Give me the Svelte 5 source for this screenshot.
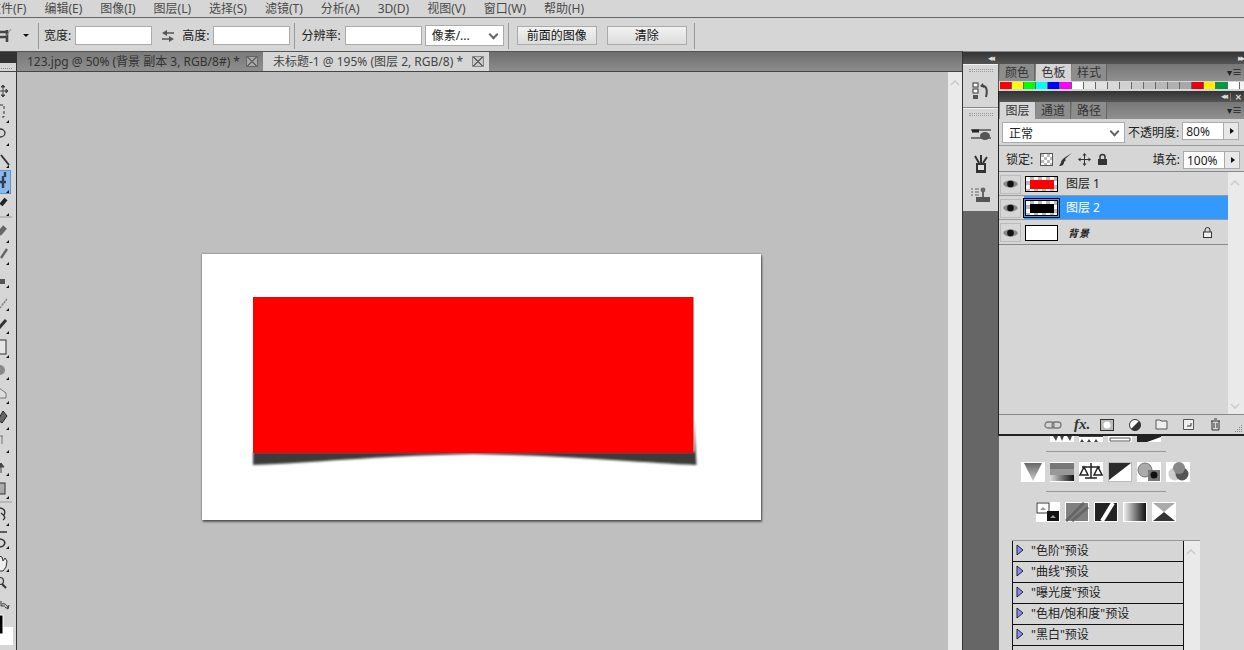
<script>
  const menus = ['文件(F)', '编辑(E)', '图像(I)', '图层(L)', '选择(S)', '滤镜(T)', '分析(A)', '3D(D)', '视图(V)', '窗口(W)', '帮助(H)'];

  const grays = ['#fff', '#e8e8e8', '#e0e0e0', '#d8d8d8', '#d0d0d0', '#c8c8c8', '#c0c0c0', '#b8b8b8', '#b0b0b0', '#a8a8a8'];
  const swatches = ['#f00', '#ff0', '#0f0', '#0ff', '#00f', '#f0f', ...grays, '#e60012', '#fff100', '#009944', '#fff', '#f4f4f4', '#eaeaea'];

  const layers = [
    { name: '图层 1', color: '#f00', checker: true },
    { name: '图层 2', color: '#000', checker: true, active: true },
    { name: '背景', color: null, locked: true }
  ];

  const triangles = [120, 143, 165, 190, 213, 240, 262, 285, 308, 331, 355, 377, 401, 427, 450, 473, 496, 523, 546, 569];
  const presets = ['"色阶"预设', '"曲线"预设', '"曝光度"预设', '"色相/饱和度"预设', '"黑白"预设', ''];
</script>

<div class="app">
  <nav class="menu">
    {#each menus as m}<span>{m}</span>{/each}
  </nav>

  <div class="options">
    <div class="tool-pick">
      <svg width="18" height="18" viewBox="0 0 18 18"><path d="M0 10h12M11 3v12M4 5h7v7" fill="none" stroke="#444" stroke-width="2.6"/><path d="M10 9l5-7" stroke="#888"/></svg>
      <i class="caret"></i>
    </div>
    <span class="sep"></span>
    <label class="first">宽度:<span class="input"></span></label>
    <svg class="swap" width="14" height="12" viewBox="0 0 14 12"><path d="M5 3h8M1 9h8" stroke="#555" stroke-width="1.6"/><path d="M6 0v6L1 3zM8 6v6l5-3z" fill="#555" transform="rotate(180 7 6)"/></svg>
    <label class="second">高度:<span class="input"></span></label>
    <span class="sep s2"></span>
    <label class="third">分辨率:<span class="input"></span></label>
    <span class="select unit">像素/...<b></b></span>
    <span class="sep s3"></span>
    <button>前面的图像</button>
    <button>清除</button>
    <span class="sep s4"></span>
  </div>

  <div class="work">
    <div class="main">
      <div class="tabbar">
        <div class="corner"><i></i></div>
        <div class="tab">
          123.jpg @ 50% (背景 副本 3, RGB/8#) *
          <span class="close"></span>
        </div>
        <div class="tab on">
          未标题-1 @ 195% (图层 2, RGB/8) *
          <span class="close"></span>
        </div>
      </div>

      <div class="stage">
        <aside class="tools">
          <svg width="16" height="578" viewBox="0 72 16 578">
            <rect x="-1" y="170.500" width="11.500" height="23" fill="#8db9e8" stroke="#5c94d6"/>
            <path d="M3 86v10M-1 91h9M3 85l-2 2h4zM3 97l-2-2h4zM8 91l-2-2v4z" stroke="#444" fill="#444"/>
            <path d="M0 105h4v12h-4" fill="none" stroke="#333" stroke-dasharray="3 2"/>
            <ellipse cx="0" cy="133" rx="5" ry="4" fill="none" stroke="#333" stroke-width="1.300"/>
            <path d="M1 155l8 10" stroke="#333" stroke-width="2"/>
            <path d="M-1 152l1 2" stroke="#999"/>
            <path d="M-2 182h8M3 176v12M5 172v5" stroke="#2e4058" stroke-width="2.400" fill="none"/>
            <path d="M1 205l5-6" stroke="#222" stroke-width="4"/>
            <line x1="0" y1="217" x2="12" y2="217" stroke="#999"/>
            <path d="M-1 234l6-7" stroke="#666" stroke-width="5"/>
            <path d="M1 258l6-9" stroke="#666" stroke-width="2.400"/>
            <rect x="-2" y="279" width="7" height="5" fill="#555"/>
            <path d="M0 308l7-9M2 305l5-6" stroke="#888" stroke-width="1.500" stroke-dasharray="2 1"/>
            <path d="M-1 328l7-8" stroke="#333" stroke-width="3"/>
            <rect x="-2" y="340" width="8" height="14" fill="#e6e6e6" stroke="#333"/>
            <circle cx="0" cy="370" r="5" fill="#888"/>
            <path d="M-1 388l7 5v5h-7z" fill="#ddd" stroke="#777"/>
            <path d="M-2 420l5-9 4 5-5 7z" fill="#666" stroke="#222"/>
            <path d="M-1 436h4M2 436v8" stroke="#777" fill="none"/>
            <path d="M1 463l-3 4h6zM1 467v6" stroke="#444" fill="#444"/>
            <rect x="-2" y="483" width="7" height="11" fill="#aaa" stroke="#333"/>
            <line x1="0" y1="502" x2="12" y2="502" stroke="#999"/>
            <path d="M-1 508c5 0 7 3 5 7M1 513c4 3 5 5 2 7" fill="none" stroke="#333" stroke-width="1.400"/>
            <path d="M0 532h7M-1 539c5 0 7 3 5 6 -1 2-3 2-5 2" fill="none" stroke="#333" stroke-width="1.600"/>
            <path d="M-1 556l3 1 1 4 2-3 2 3-1 6-3 4h-4" fill="#eee" stroke="#333"/>
            <circle cx="0" cy="581" r="3.500" fill="none" stroke="#333" stroke-width="1.200"/>
            <path d="M2 584l4 4" stroke="#333" stroke-width="2"/>
            <path d="M2 604c3-1 5 1 6 4M1 601v5h4M9 605l-1 4-3-2" fill="none" stroke="#333"/>
            <rect x="-3" y="627" width="16" height="18" fill="#fff"/>
            <rect x="-3" y="615" width="6" height="19" fill="#000" stroke="#fff"/>
            {#each triangles as y}<path d="M6 {y + 3}h3v-3z" fill="#111"/>{/each}
          </svg>
        </aside>

        <div class="canvas">
          <div class="doc">
            <svg width="559" height="266" viewBox="0 0 559 266">
              <defs>
                <filter id="soft" x="-5%" y="-50%" width="110%" height="200%"><feGaussianBlur stdDeviation="1"/></filter>
              </defs>
              <path d="M51 198V211C110 209 170 202 271 200C380 202 440 209 494.500 211L492 165V198Z" fill="#3a3a3a" filter="url(#soft)"/>
              <rect x="51" y="43" width="440.500" height="156" fill="#f00"/>
            </svg>
          </div>
        </div>

        <div class="vscroll"><svg class="chev" width="10" height="6" viewBox="0 0 10 6"><path d="M1 5l4-4 4 4" fill="none" stroke="#ccc" stroke-width="1.6"/></svg></div>
      </div>
    </div>

    <div class="right">
      <div class="darkbar"><span class="arrows">◂◂</span><span class="arrows">▸▸</span></div>
      <div class="right-row">
        <div class="dock">
          <div class="dock-group first-group">
            <i class="grip"></i>
            <svg width="18" height="18" viewBox="0 0 18 18"><rect x="1" y="1" width="5" height="4" fill="#fff" stroke="#333"/><rect x="1" y="7" width="5" height="4" fill="#fff" stroke="#333"/><rect x="1" y="13" width="5" height="4" fill="#555"/><path d="M9 4c5-1 7 3 5 11" fill="none" stroke="#444" stroke-width="2"/><path d="M11 1L8 4l4 2z" fill="#444"/></svg>
          </div>
          <div class="dock-group">
            <i class="grip"></i>
            <svg width="20" height="14" viewBox="0 0 20 14"><path d="M0 3h20M0 11h20" stroke="#555" stroke-width="1.500"/><path d="M1 4h7" stroke="#222" stroke-width="3"/><ellipse cx="14" cy="9" rx="5" ry="4" fill="#555"/></svg>
            <svg width="18" height="20" viewBox="0 0 18 20"><path d="M4 9h10v10H4z" fill="#333"/><path d="M7 9L3 2M9 9V1M11 9l4-6" stroke="#333" stroke-width="2"/><rect x="6" y="11" width="6" height="5" fill="#ddd"/></svg>
            <svg width="20" height="17" viewBox="0 0 20 17"><path d="M0 2h2M0 5h2M0 8h2M4 2h4M4 5h4M4 8h4" stroke="#666"/><circle cx="12" cy="3" r="2.400" fill="#666"/><path d="M12 5v5" stroke="#666" stroke-width="2"/><rect x="5" y="10" width="14" height="5" fill="#555"/></svg>
          </div>
        </div>

        <div class="panels">
          <section class="colors">
            <div class="ptabs">
              <span>颜色</span><span class="on">色板</span><span>样式</span>
              <i class="pmenu">▾≡</i>
            </div>
            <div class="swatches">
              {#each swatches as c}<i style="background:{c}"></i>{/each}
            </div>
          </section>

          <section class="layers">
            <div class="layers-head"><span class="arrows">◂◂</span><span class="bar"></span><b>✕</b></div>
            <div class="ptabs">
              <span class="on">图层</span><span>通道</span><span>路径</span>
              <i class="pmenu">▾≡</i>
            </div>
            <div class="blend">
              <span class="select mode">正常<b></b></span>
              <span class="lab">不透明度:</span>
              <span class="num">80%</span><span class="stepper"></span>
            </div>
            <div class="lock">
              <span class="lab">锁定:</span>
              <svg width="13" height="13" viewBox="0 0 13 13"><rect x=".5" y=".5" width="12" height="12" fill="#fff" stroke="#555"/><path d="M1 1h3v3H1zM7 1h3v3H7zM4 4h3v3H4zM10 4h2v3h-2zM1 7h3v3H1zM7 7h3v3H7zM4 10h3v2H4zM10 10h2v2h-2z" fill="#bbb"/></svg>
              <svg width="13" height="13" viewBox="0 0 13 13"><path d="M0 13c3 0 5-1 5-4l2-2-2-2-2 2c-1 1-1 4-3 6zM6 6l7-6-8 5z" fill="#333"/></svg>
              <svg width="13" height="13" viewBox="0 0 13 13"><path d="M6.500 1v11M1 6.500h11" stroke="#333"/><path d="M6.500 0l-2 2.500h4zM6.500 13l-2-2.500h4zM0 6.500l2.500-2v4zM13 6.500l-2.500-2v4z" fill="#333"/></svg>
              <svg width="11" height="13" viewBox="0 0 11 13"><path d="M3 6V4a2.500 2.500 0 0 1 5 0v2" fill="none" stroke="#333" stroke-width="1.500"/><rect x="1" y="6" width="9" height="6" fill="#333"/></svg>
              <span class="lab fill">填充:</span>
              <span class="num">100%</span><span class="stepper"></span>
            </div>

            <div class="list">
              <div class="rows">
                {#each layers as l}
                  <div class="row" class:active={l.active}>
                    <span class="eye">
                      <svg width="15" height="10" viewBox="0 0 15 10"><path d="M0 5C3 0 12 0 15 5C12 10 3 10 0 5z" fill="#888"/><circle cx="7.500" cy="5" r="3.300" fill="#111"/></svg>
                    </span>
                    <span class="thumb" class:checker={l.checker}>
                      {#if l.color}<i style="background:{l.color}"></i>{/if}
                    </span>
                    <span class="lname" class:bg={l.locked}>{l.name}</span>
                    {#if l.locked}
                      <svg class="rowlock" width="9" height="11" viewBox="0 0 9 11"><path d="M2 5V3a2.500 2.500 0 0 1 5 0v2" fill="none" stroke="#333"/><rect x=".5" y="5" width="8" height="5.500" fill="#eee" stroke="#333"/></svg>
                    {/if}
                  </div>
                {/each}
              </div>
              <div class="vscroll small">
                <svg class="chev" width="10" height="6" viewBox="0 0 10 6"><path d="M1 5l4-4 4 4" fill="none" stroke="#ccc" stroke-width="1.600"/></svg>
                <svg class="chev down" width="10" height="6" viewBox="0 0 10 6"><path d="M1 1l4 4 4-4" fill="none" stroke="#ccc" stroke-width="1.600"/></svg>
              </div>
            </div>

            <div class="foot">
              <svg width="18" height="8" viewBox="0 0 18 8"><rect x="1" y="1" width="9" height="6" rx="3" fill="none" stroke="#777" stroke-width="1.300"/><rect x="8" y="1" width="9" height="6" rx="3" fill="none" stroke="#777" stroke-width="1.300"/></svg>
              <span class="fx">fx.</span>
              <svg width="14" height="12" viewBox="0 0 14 12"><rect x=".5" y=".5" width="13" height="11" fill="#bbb" stroke="#333"/><circle cx="7" cy="6" r="3.500" fill="#fff"/></svg>
              <svg width="14" height="12" viewBox="0 0 14 12"><circle cx="6" cy="6" r="5.500" fill="#fff" stroke="#333"/><path d="M10 2A5.500 5.500 0 0 1 2 10z" fill="#333"/></svg>
              <svg width="13" height="11" viewBox="0 0 13 11"><path d="M1 1h4l1 1h6v8H1z" fill="#eee" stroke="#555"/></svg>
              <svg width="11" height="11" viewBox="0 0 11 11"><path d="M.5.500h10v10H.5z" fill="#eee" stroke="#555"/><path d="M4 7h4V4" fill="none" stroke="#333"/></svg>
              <svg width="11" height="13" viewBox="0 0 11 13"><path d="M1 3h9M4 1h3M2 3v9h7V3M4 5v5M7 5v5" fill="none" stroke="#333"/></svg>
              <svg class="resize" width="10" height="10" viewBox="0 0 10 10"><path d="M8 1h1v1H8zM6 3h1v1H6zM8 3h1v1H8zM4 5h1v1H4zM6 5h1v1H6zM8 5h1v1H8zM2 7h1v1H2zM4 7h1v1H4zM6 7h1v1H6zM8 7h1v1H8z" fill="#888"/></svg>
            </div>
          </section>

          <section class="adjust">
            <div class="clip-row">
              <svg class="clipped" viewBox="0 0 24 6"><rect width="24" height="6" fill="#fff"/><path d="M3 0h5l-2 5zM10 0h4l-2 5zM17 0h5l-2 5z" fill="#444"/></svg>
              <svg class="clipped" viewBox="0 0 24 6"><rect width="24" height="6" fill="#fff"/><path d="M0 0h24v1H0zM3 3l2 3H1zM10 3l2 3H8zM17 3l2 3h-4z" fill="#444"/></svg>
              <svg class="clipped" viewBox="0 0 24 6"><rect width="24" height="6" fill="#fff"/><path d="M2 2h20v3H2z" fill="none" stroke="#555"/></svg>
              <svg class="clipped" viewBox="0 0 24 6"><rect width="24" height="6" fill="#fff"/><path d="M0 6V0h24v1L10 6z" fill="#222"/></svg>
            </div>
            <hr />
            <div class="tile-row">
              <svg class="tile" viewBox="0 0 24 20"><defs><linearGradient id="fun" x2="0" y2="1"><stop offset="0" stop-color="#666"/><stop offset="1" stop-color="#ccc"/></linearGradient></defs><path d="M3 1h18l-9 18z" fill="url(#fun)"/></svg>
              <svg class="tile" viewBox="0 0 24 20"><defs><linearGradient id="hg"><stop offset="0" stop-color="#ddd"/><stop offset="1" stop-color="#111"/></linearGradient></defs><rect y="1" width="24" height="6" fill="#777"/><rect y="7" width="24" height="6" fill="#999"/><rect y="13" width="24" height="6" fill="url(#hg)"/></svg>
              <svg class="tile" viewBox="0 0 24 20"><path d="M12 1v15M3 5h18M6 16h12M5 5l-4 8h8zM19 5l-4 8h8z" fill="none" stroke="#222" stroke-width="1.500"/></svg>
              <svg class="tile" viewBox="0 0 24 20"><rect x=".5" y=".5" width="23" height="19" fill="#fff" stroke="#bbb"/><path d="M1 18V1h22z" fill="#2a2a2a"/></svg>
              <svg class="tile" viewBox="0 0 24 20"><circle cx="8" cy="8" r="7" fill="#aaa" stroke="#777"/><rect x="11" y="8" width="12" height="11" fill="#777"/><circle cx="17" cy="13" r="3.500" fill="#111"/></svg>
              <svg class="tile" viewBox="0 0 24 20"><circle cx="9" cy="12" r="6.500" fill="#ccc"/><circle cx="16" cy="12" r="6.500" fill="#555"/><circle cx="13" cy="6" r="6" fill="#888"/></svg>
            </div>
            <hr class="second-rule" />
            <div class="tile-row third-row">
              <svg class="tile" viewBox="0 0 24 20"><rect x="1" y="1" width="12" height="10" fill="#fff" stroke="#333"/><rect x="11" y="9" width="12" height="10" fill="#111"/><path d="M4 8l3-3 3 3zM14 16l3-3 3 3z" fill="#999"/></svg>
              <svg class="tile" viewBox="0 0 24 20"><rect x="1" y="1" width="22" height="18" fill="#808080"/><path d="M1 19L19 1M7 19L23 5" stroke="#666" stroke-width="3"/></svg>
              <svg class="tile" viewBox="0 0 24 20"><rect x="1" y="1" width="22" height="18" fill="#222"/><path d="M8 19L19 1" stroke="#fff" stroke-width="4"/></svg>
              <svg class="tile" viewBox="0 0 24 20"><defs><linearGradient id="gr"><stop offset="0" stop-color="#eee"/><stop offset="1" stop-color="#111"/></linearGradient></defs><rect x="1" y="1" width="22" height="18" fill="url(#gr)"/></svg>
              <svg class="tile" viewBox="0 0 24 20"><path d="M1 1h22L12 10z" fill="#aaa"/><path d="M1 19h22L12 10z" fill="#333"/></svg>
            </div>

            <div class="presets">
              <div class="plist">
                {#each presets as p}
                  <div class="preset">
                    <svg class="tri" width="8" height="12" viewBox="0 0 8 12"><path d="M1 1l6 5-6 5z" fill="#8c8cf5" stroke="#223"/></svg>
                    {p}
                  </div>
                {/each}
              </div>
              <div class="vscroll small">
                <svg class="chev" width="10" height="6" viewBox="0 0 10 6"><path d="M1 5l4-4 4 4" fill="none" stroke="#ccc" stroke-width="1.600"/></svg>
              </div>
            </div>
          </section>
        </div>
      </div>
    </div>
  </div>
</div>

<style>
  :global(body) {
    margin: 0;
    overflow: hidden;
  }

  .app {
    width: 1244px;
    height: 650px;
    overflow: hidden;
    display: flex;
    flex-direction: column;
    background: #d6d6d6;
    color: #222;
    font: 12px/1 "Noto Sans", "Noto Sans CJK SC", sans-serif;
  }

  .menu {
    height: 17px;
    flex: none;
    display: flex;
    align-items: center;
    gap: 18px;
    margin-left: -11px;
    color: #4a4a4a;
    font-size: 12px;
    white-space: nowrap;
  }

  .options {
    height: 34px;
    flex: none;
    box-sizing: border-box;
    border-top: 1px solid #666;
    padding-top: 2px;
    display: flex;
    align-items: center;
    white-space: nowrap;
    font-size: 12px;
  }

  .tool-pick {
    width: 42px;
    flex: none;
    margin-left: -4px;
    display: flex;
    align-items: center;
    gap: 9px;
  }

  .caret {
    width: 0;
    height: 0;
    border: 3px solid transparent;
    border-top: 3px solid #111;
    border-bottom: 0;
  }

  .sep {
    width: 1px;
    height: 26px;
    background: #999;
    flex: none;
  }

  label {
    display: flex;
    align-items: center;
    gap: 4px;
  }

  .first {
    margin-left: 5px;
  }

  .swap {
    margin: 0 7px 0 9px;
  }

  .input {
    display: block;
    width: 75px;
    height: 17px;
    background: #fff;
    border: 1px solid #aaa;
  }

  .s2 {
    margin-left: 4px;
  }

  .third {
    margin-left: 6px;
  }

  .select {
    position: relative;
    display: flex;
    align-items: center;
    box-sizing: border-box;
    background: #fff;
    border: 1px solid #aaa;
    padding-left: 6px;
  }

  .select b {
    position: absolute;
    right: 6px;
    top: 50%;
    width: 5px;
    height: 5px;
    margin-top: -5px;
    border-right: 2px solid #666;
    border-bottom: 2px solid #666;
    transform: rotate(45deg);
  }

  .unit {
    width: 79px;
    height: 21px;
    margin-left: 3px;
  }

  .s3 {
    margin: 0 8px 0 4px;
  }

  button {
    width: 80px;
    height: 19px;
    flex: none;
    margin-right: 10px;
    padding: 0;
    border: 1px solid #aaa;
    background: linear-gradient(#f2f2f2, #dcdcdc);
    color: #111;
    font: inherit;
  }

  .s4 {
    margin-left: -3px;
  }

  .work {
    flex: 1;
    min-height: 0;
    display: flex;
  }

  .main {
    width: 962px;
    display: flex;
    flex-direction: column;
    border-right: 1px solid #333;
    box-sizing: content-box;
  }

  .tabbar {
    height: 21px;
    flex: none;
    display: flex;
    box-sizing: border-box;
    border-top: 1px solid #555;
    border-bottom: 1px solid #444;
    background: linear-gradient(#6e6e6e, #8c8c8c);
    white-space: nowrap;
  }

  .corner {
    width: 16px;
    flex: none;
    background: linear-gradient(#333 0 11px, #d6d6d6 11px);
    border-right: 1px solid #333;
    position: relative;
  }

  .corner i {
    position: absolute;
    left: 1px;
    top: 16px;
    width: 11px;
    border-top: 1px dotted #888;
  }

  .tab {
    width: 246px;
    flex: none;
    box-sizing: border-box;
    display: flex;
    align-items: center;
    padding: 0 5px 0 10px;
    background: linear-gradient(#7a7a7a, #8e8e8e);
    color: #333;
  }

  .tab.on {
    width: 226px;
    background: #d6d6d6;
    color: #444;
  }

  .close {
    width: 10px;
    height: 9px;
    margin-left: auto;
    border: 1px solid #666;
    background: linear-gradient(45deg, transparent 46%, #666 46% 54%, transparent 54%), linear-gradient(-45deg, transparent 46%, #666 46% 54%, transparent 54%), #a8a8a8;
  }

  .tab.on .close {
    background-color: #c8c8c8;
    border-color: #888;
  }

  .stage {
    flex: 1;
    min-height: 0;
    display: flex;
  }

  .tools {
    width: 16px;
    flex: none;
    overflow: hidden;
    border-right: 1px solid #333;
    background: #d6d6d6;
  }

  .tools svg {
    display: block;
  }

  .canvas {
    flex: 1;
    background: #bfbfbf;
    display: flex;
    justify-content: center;
    padding-top: 182px;
    padding-right: 3px;
    box-sizing: border-box;
  }

  .doc {
    width: 559px;
    height: 266px;
    background: #fff;
    box-shadow: 1px 2px 2px rgba(0, 0, 0, 0.5), 0 0 2px rgba(0, 0, 0, 0.45);
  }

  .doc svg {
    display: block;
  }

  .vscroll {
    position: relative;
    width: 14px;
    flex: none;
    background: #eaeaea;
  }

  .chev {
    position: absolute;
    left: 2px;
    top: 8px;
  }

  .right {
    flex: 1;
    min-width: 0;
    display: flex;
    flex-direction: column;
  }

  .darkbar {
    height: 13px;
    flex: none;
    display: flex;
    justify-content: space-between;
    align-items: center;
    padding: 0 1px 0 25px;
    background: linear-gradient(#333, #555);
    border-top: 1px solid #888;
    box-sizing: border-box;
  }

  .arrows {
    color: #ddd;
    font-size: 9px;
    letter-spacing: -2px;
    font-family: "DejaVu Sans", sans-serif;
  }

  .right-row {
    flex: 1;
    min-height: 0;
    display: flex;
    background: #666;
  }

  .dock {
    width: 35px;
    flex: none;
  }

  .dock-group {
    display: flex;
    flex-direction: column;
    align-items: center;
    gap: 13px;
    height: 103px;
    box-sizing: border-box;
    background: #d6d6d6;
    padding-top: 4px;
    border-top: 1px solid #f2f2f2;
  }

  .first-group {
    height: 44px;
    border-bottom: 1px solid #888;
    gap: 8px;
  }

  .grip {
    width: 24px;
    height: 3px;
    flex: none;
    border-top: 1px dotted #999;
    border-bottom: 1px dotted #999;
    box-sizing: border-box;
    margin-bottom: -2px;
  }

  .first-group .grip {
    margin-bottom: 2px;
  }

  .panels {
    flex: 1;
    min-width: 0;
    display: flex;
    flex-direction: column;
  }

  .ptabs {
    position: relative;
    height: 17px;
    flex: none;
    display: flex;
    align-items: flex-end;
    background: linear-gradient(#777, #909090);
    padding-left: 1px;
    color: #333;
  }

  .ptabs span {
    width: 35px;
    height: 17px;
    margin-right: 1px;
    display: flex;
    align-items: center;
    justify-content: center;
    background: #8d8d8d;
    border-right: 1px solid #666;
    box-sizing: border-box;
  }

  .ptabs span.on {
    background: #d6d6d6;
    border-right: 0;
  }

  .pmenu {
    position: absolute;
    right: 2px;
    top: 3px;
    font-style: normal;
    font-size: 10px;
    color: #222;
  }

  .colors {
    background: #d6d6d6;
    flex: none;
    border-left: 1px solid #555;
  }

  .swatches {
    height: 9px;
    display: flex;
    padding-top: 1px;
    padding-left: 1px;
    overflow: hidden;
  }

  .swatches i {
    width: 11px;
    height: 7px;
    flex: none;
    border-right: 1px solid #666;
  }

  .layers {
    flex: none;
    height: 345px;
    display: flex;
    flex-direction: column;
    box-sizing: border-box;
    border-left: 1px solid #222;
    border-bottom: 2px solid #222;
    background: #d6d6d6;
  }

  .layers-head {
    height: 11px;
    flex: none;
    display: flex;
    justify-content: flex-end;
    align-items: center;
    gap: 4px;
    padding-right: 2px;
    background: linear-gradient(#333, #555);
    color: #ddd;
  }

  .layers-head .bar {
    width: 1px;
    height: 8px;
    background: #777;
  }

  .layers-head b {
    font-size: 8px;
  }

  .blend {
    height: 27px;
    flex: none;
    box-sizing: border-box;
    border-bottom: 1px solid #999;
    display: flex;
    align-items: flex-start;
    padding: 3px 0 0 3px;
    white-space: nowrap;
  }

  .mode {
    width: 123px;
    height: 21px;
    padding: 2px 0 0 6px;
  }

  .lab {
    margin-left: 3px;
    color: #222;
    line-height: 21px;
  }

  .num {
    margin-left: 3px;
    width: 41px;
    height: 18px;
    box-sizing: border-box;
    background: #fff;
    border: 1px solid #aaa;
    border-right: 0;
    padding-left: 3px;
    line-height: 17px;
    color: #222;
  }

  .stepper {
    position: relative;
    width: 16px;
    height: 18px;
    box-sizing: border-box;
    border: 1px solid #aaa;
    background: #e8e8e8;
  }

  .stepper::after {
    content: "";
    position: absolute;
    left: 6px;
    top: 5px;
    border: 3px solid transparent;
    border-left: 4px solid #111;
    border-right: 0;
  }

  .lock {
    height: 26px;
    flex: none;
    box-sizing: border-box;
    border-bottom: 1px solid #888;
    display: flex;
    align-items: center;
    gap: 6px;
    padding: 2px 4px 0 4px;
    white-space: nowrap;
  }

  .lock .lab {
    margin: 0 1px 0 3px;
  }

  .lock .fill {
    margin: 0;
    margin-left: auto;
  }

  .lock .num {
    margin-left: -3px;
  }

  .lock .stepper {
    margin-left: -6px;
  }

  .list {
    flex: 1;
    min-height: 0;
    display: flex;
    border-bottom: 1px solid #888;
  }

  .rows {
    flex: 1;
  }

  .vscroll.small {
    width: 16px;
  }

  .vscroll .down {
    top: auto;
    bottom: 5px;
  }

  .row {
    position: relative;
    height: 24px;
    display: flex;
    align-items: center;
    box-sizing: border-box;
    padding-top: 1px;
    border-bottom: 1px solid #999;
  }

  .row:last-child {
    height: 25px;
    border-bottom: 1px solid #888;
  }

  .row.active {
    background: linear-gradient(to right, #d6d6d6 25px, #39f 25px);
    color: #fff;
  }

  .eye {
    width: 21px;
    height: 19px;
    flex: none;
    margin-left: 1px;
    display: flex;
    align-items: center;
    justify-content: center;
    box-shadow: inset 0 0 0 1px #bbb;
  }

  .thumb {
    width: 33px;
    height: 16px;
    flex: none;
    margin-left: 4px;
    box-sizing: border-box;
    border: 1px solid #000;
    background: #fff;
    display: flex;
    align-items: center;
    justify-content: center;
  }

  .thumb.checker {
    background: repeating-conic-gradient(#bbb 0 25%, #fff 0 50%) 0 0 / 8px 8px;
  }

  .row.active .thumb {
    outline: 1px solid #000;
    outline-offset: 1px;
  }

  .thumb i {
    width: 24px;
    height: 9px;
  }

  .lname {
    margin-left: 8px;
  }

  .lname.bg {
    margin-left: 10px;
    font-style: italic;
    font-weight: 700;
    font-size: 10px;
    letter-spacing: 1px;
  }

  .rowlock {
    position: absolute;
    right: 16px;
    top: 7px;
  }

  .foot {
    position: relative;
    height: 19px;
    flex: none;
    display: flex;
    align-items: center;
    padding-left: 45px;
    gap: 12px;
  }

  .fx {
    font: italic 700 15px "Liberation Serif", serif;
    color: #333;
    width: 15px;
    margin: 0 -1px 0 0;
  }

  .foot svg:nth-of-type(3) {
    margin-left: 3px;
  }

  .foot svg:nth-of-type(5) {
    margin-left: 3px;
  }

  .foot svg:nth-of-type(6) {
    margin-left: 4px;
  }

  .resize {
    position: absolute;
    right: 1px;
    bottom: 0;
  }

  .adjust {
    flex: 1;
    min-height: 0;
    overflow: hidden;
    position: relative;
    margin-left: 1px;
    background: #d6d6d6;
    display: flex;
    flex-direction: column;
    align-items: flex-start;
  }

  .adjust > * {
    flex: none;
  }

  .clip-row {
    margin-left: 51px;
    height: 6px;
    display: flex;
    gap: 5px;
    overflow: hidden;
  }

  .tile {
    display: block;
    width: 24px;
    height: 20px;
    background: #fff;
    flex: none;
  }

  .clipped {
    display: block;
    width: 24px;
    height: 6px;
    flex: none;
  }

  hr {
    width: 120px;
    height: 1px;
    margin: 9px 0 0 47px;
    padding: 0;
    border: 0;
    background: #999;
  }

  .tile-row {
    display: flex;
    gap: 5px;
    margin: 10px 0 0 22px;
  }

  .second-rule {
    margin-top: 9px;
  }

  .third-row {
    margin-left: 37px;
  }

  .presets {
    display: flex;
    margin: 18px 0 0 13px;
    width: 188px;
    border-top: 1px solid #999;
    height: 120px;
  }

  .plist {
    flex: 1;
    box-sizing: border-box;
    border: 1px solid #111;
    border-top: 0;
  }

  .preset {
    height: 21px;
    box-sizing: border-box;
    border-bottom: 1px solid #111;
    display: flex;
    align-items: center;
    padding-left: 18px;
    position: relative;
    color: #222;
  }

  .tri {
    position: absolute;
    left: 3px;
    top: 3px;
  }
</style>
